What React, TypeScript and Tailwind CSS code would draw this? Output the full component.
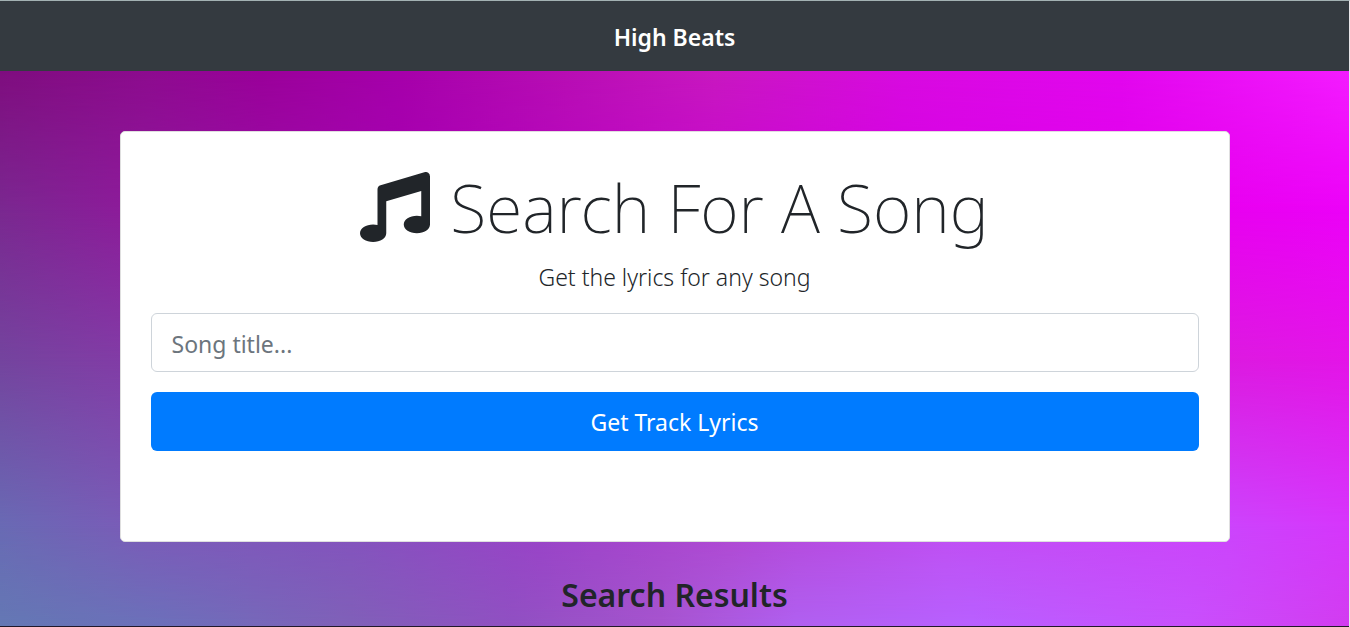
import { useState } from "react";
import { FaMusic } from "react-icons/fa";

function Backdrop() {
  return (
    <div aria-hidden="true" className="absolute inset-0 -z-10">
      <div className="absolute inset-0 bg-[linear-gradient(90deg,#7f0d7f_0%,#8d0b8f_11%,#9b009b_20%,#a500aa_29%,#b80eb4_42%,#c818c0_53%,#d80ae0_67%,#e206ee_83%,#f41cff_100%)]" />
      <div className="absolute inset-0 bg-[linear-gradient(90deg,#7a2890_0%,#8c1c9a_9%,#a800b4_30%,#c404cc_50%,#d800e8_70%,#e800f0_91%,#ec02f8_100%)] [mask-image:linear-gradient(180deg,transparent_0%,black_25%)]" />
      <div className="absolute inset-0 bg-[linear-gradient(90deg,#74449e_0%,#823ca6_9%,#a820b8_40%,#dc1ae0_91%,#e414e8_100%)] [mask-image:linear-gradient(180deg,transparent_25%,black_52%)]" />
      <div className="absolute inset-0 bg-[linear-gradient(90deg,#696ab4_0%,#7c5ab8_11%,#8452be_26%,#9a42c8_40%,#b048d2_54%,#c04ef2_70%,#cc44fc_91%,#d636fc_100%)] [mask-image:linear-gradient(180deg,transparent_52%,black_82%)]" />
      <div className="absolute inset-0 bg-[linear-gradient(90deg,#6478b4_0%,#6c70ba_12%,#8060b8_26%,#9050c2_38%,#a654ce_49%,#b060f0_59%,#b860ff_72%,#c850fc_88%,#d23cf0_100%)] [mask-image:linear-gradient(180deg,transparent_82%,black_100%)]" />
    </div>
  );
}

export default function App() {
  const [title, setTitle] = useState("");

  return (
    <div className="flex min-h-screen flex-col border-t border-r border-t-[#a3b1b3] border-r-[#e9e6ea] font-['Noto_Sans','Open_Sans',sans-serif] text-[#212529]">
      <nav className="flex h-[70px] items-center justify-center bg-[#343a40] px-5 pt-0.5">
        <a href="#" className="text-[23px] font-semibold text-white">
          High Beats
        </a>
      </nav>

      <main className="relative isolate grow border-b border-[#20182a] px-5 pt-[60px]">
        <Backdrop />
        <section className="mx-auto max-w-[1110px] rounded-[5px] border border-[#dfdfdf] bg-white px-[30px] pt-[33px] pb-[90px]">
          <h1 className="flex items-center justify-center gap-5 text-[66px] leading-[84px] font-extralight">
            <FaMusic aria-hidden="true" className="size-[70px] shrink-0" />
            Search For A Song
          </h1>
          <p className="mt-2.5 text-center text-[23px] leading-9 font-light">
            Get the lyrics for any song
          </p>
          <form onSubmit={(event) => event.preventDefault()} className="mt-[18px] flex flex-col gap-5">
            <input
              type="text"
              aria-label="Song title"
              placeholder="Song title..."
              value={title}
              onChange={(event) => setTitle(event.target.value)}
              className="h-[59px] w-full rounded-md border border-[#ced4da] bg-white px-5 pt-0.5 text-[23px] outline-none placeholder:text-[#6c757d] focus:border-[#80bdff]"
            />
            <button
              type="submit"
              className="h-[59px] w-full rounded-md bg-[#007bff] pt-0.5 text-[23px] text-white hover:bg-[#0069d9]"
            >
              Get Track Lyrics
            </button>
          </form>
        </section>
        <h2 className="mt-8 pb-2 text-center text-[32px] leading-[42px] font-semibold">
          Search Results
        </h2>
      </main>
    </div>
  );
}
